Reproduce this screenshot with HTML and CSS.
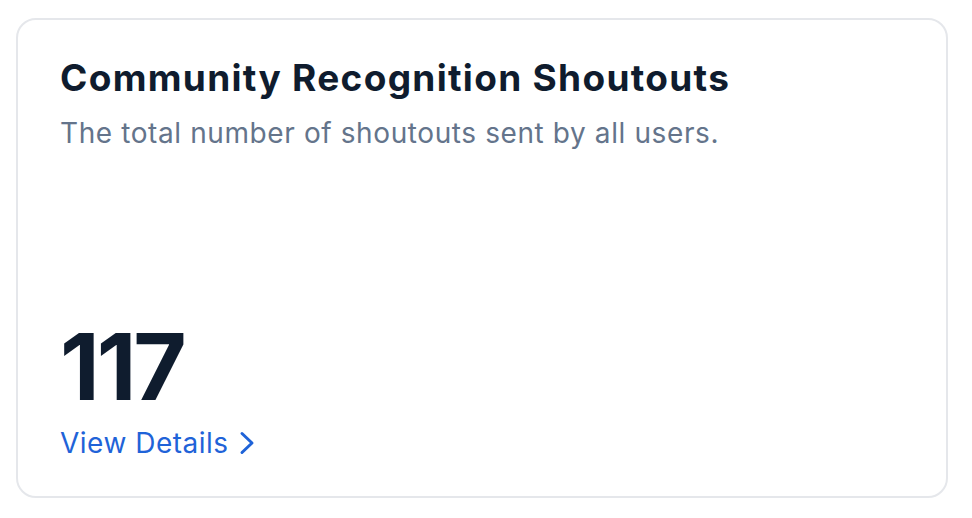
FILE: index.html
```html
<!DOCTYPE html>
<html lang="en">
<head>
  <meta charset="UTF-8">
  <title>Community Recognition Shoutouts</title>
  <meta name="viewport" content="width=device-width, initial-scale=1">
  <link rel="stylesheet" href="styles.css">
</head>
<body>
  <div class="card">
    <div class="card-head">
      <h1>Community Recognition Shoutouts</h1>
      <p class="subtitle">The total number of shoutouts sent by all users.</p>
    </div>
    <div class="card-foot">
      <div class="count">117</div>
      <a class="details" href="#">
        View Details
        <svg width="16" height="24" viewBox="0 0 16 24" fill="none" stroke="currentColor" stroke-width="3" stroke-linecap="round" stroke-linejoin="round"><path d="M3 2.5l10 9.5-10 9.5"/></svg>
      </a>
    </div>
  </div>
</body>
</html>
```

FILE: styles.css
```css
body {
  font-family: Inter, "Noto Sans", sans-serif;
  margin: 0;
  padding: 18px 24px 20px 16px;
  background: white;
}
.card {
  box-sizing: border-box;
  width: 932px;
  height: 480px;
  border: 2px solid #e5e7eb;
  border-radius: 20px;
  padding: 36px 42px 32px 42px;
  display: flex;
  flex-direction: column;
  justify-content: space-between;
}
h1 {
  margin: 0;
  font-size: 37px;
  line-height: 1.2;
  font-weight: 700;
  letter-spacing: 1.3px;
  color: #0f1c2e;
}
.subtitle {
  margin: 12px 0 0;
  font-size: 28px;
  line-height: 1.5;
  letter-spacing: 0.6px;
  color: #64748b;
}
.count {
  font-size: 92px;
  line-height: 1;
  font-weight: 700;
  letter-spacing: -3px;
  color: #0f1c2e;
}
.details {
  display: inline-flex;
  align-items: center;
  gap: 10px;
  margin-top: 9px;
  font-size: 28px;
  line-height: 1.5;
  letter-spacing: 0.5px;
  color: #1f63d8;
  text-decoration: none;
}
```
